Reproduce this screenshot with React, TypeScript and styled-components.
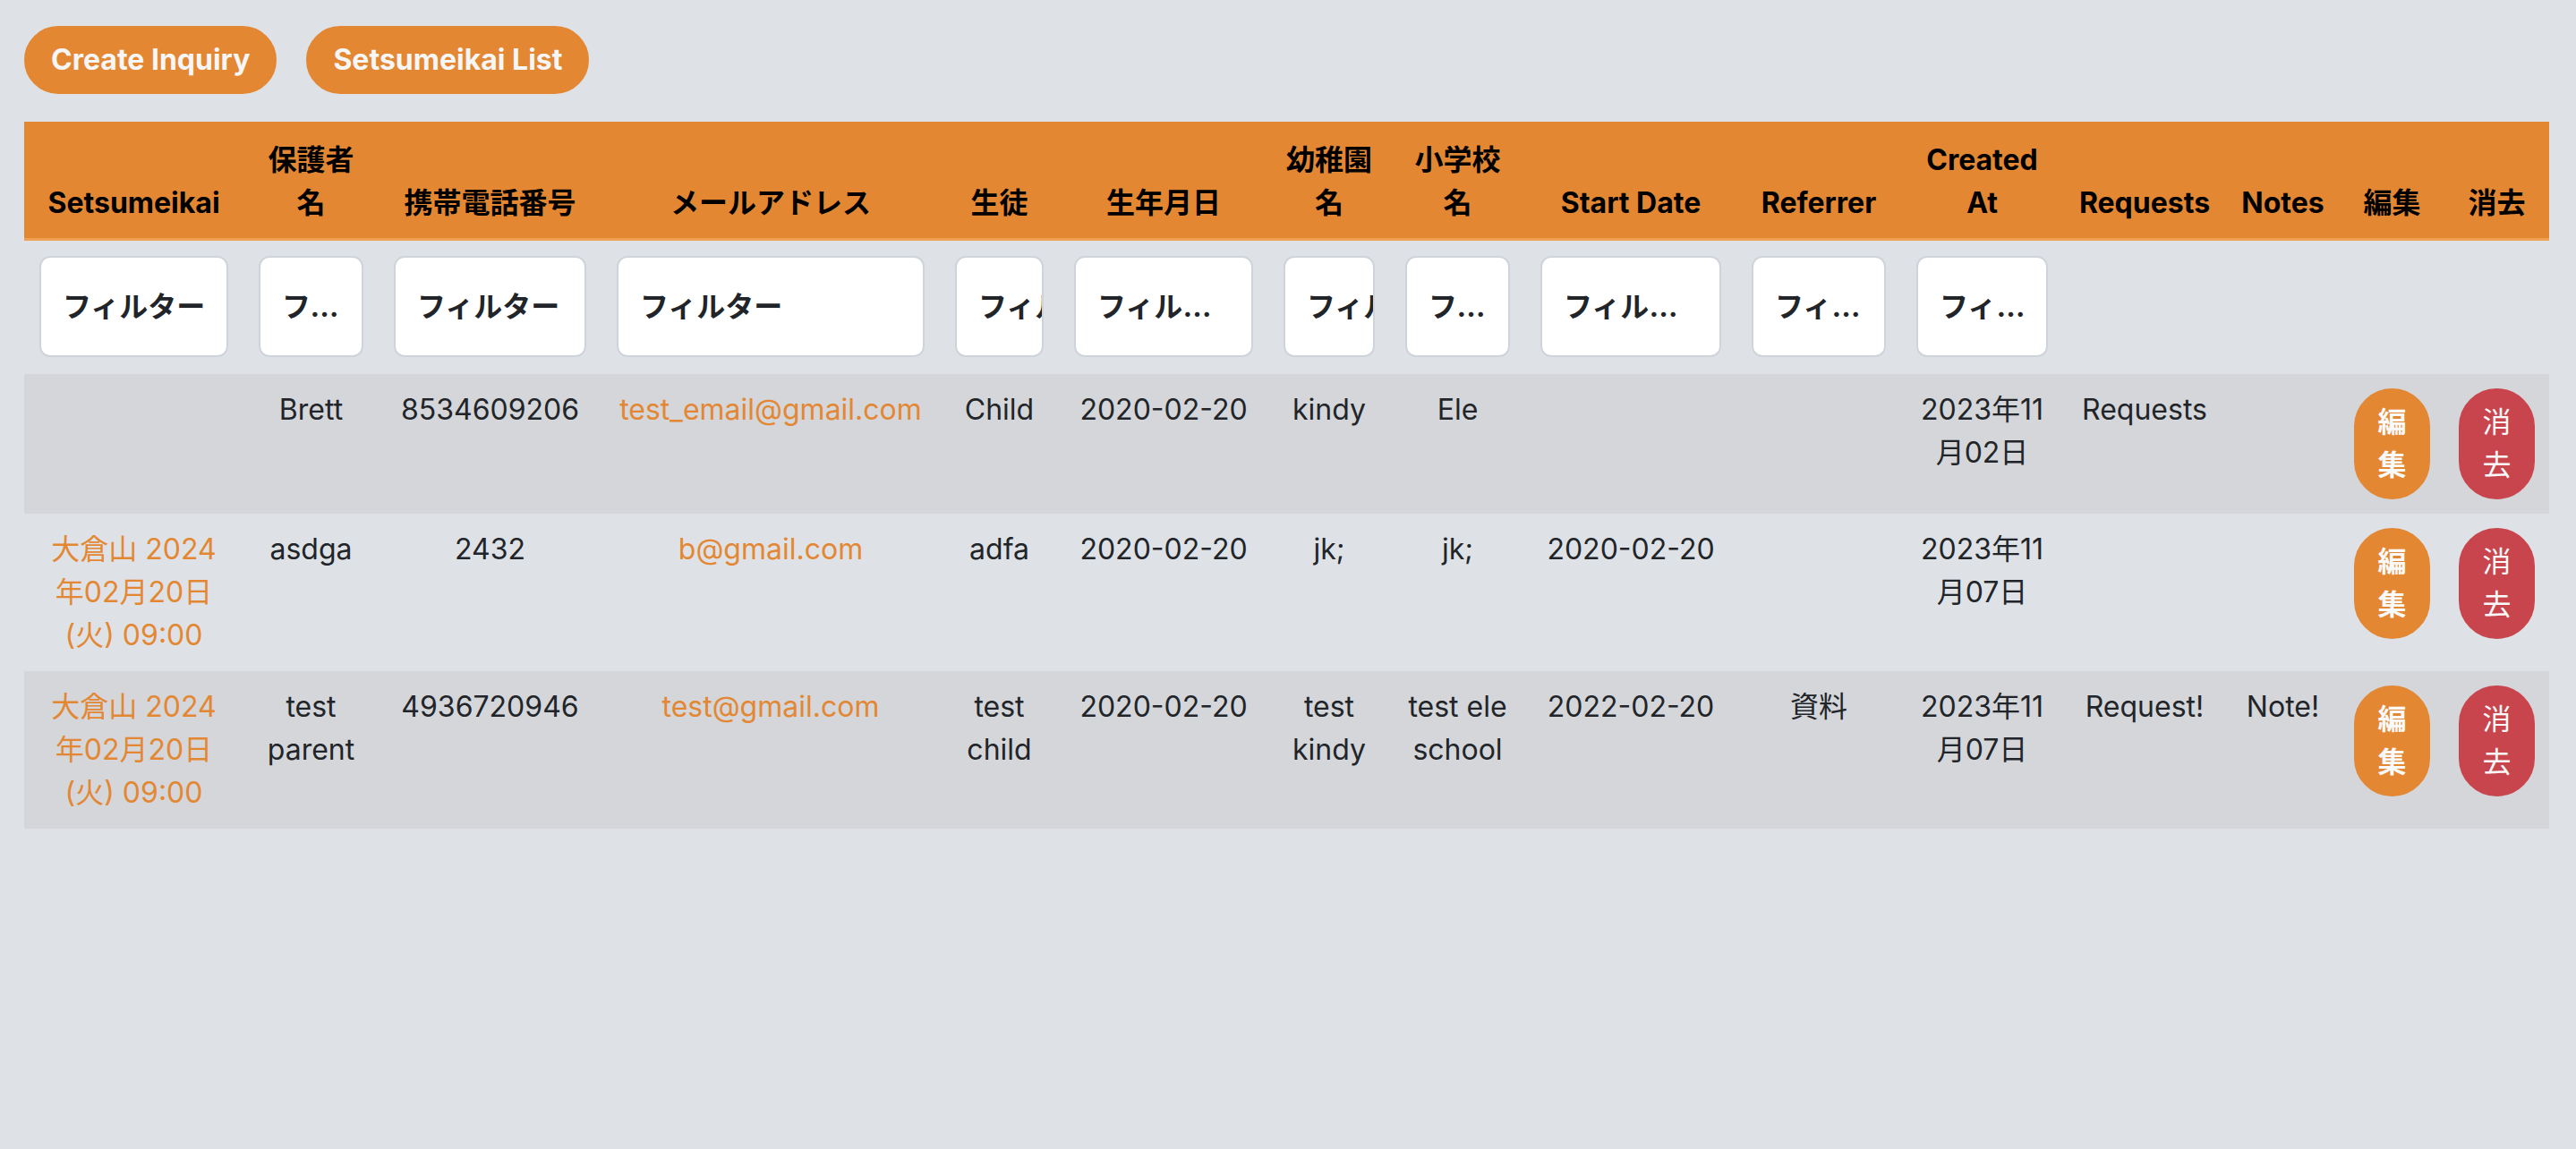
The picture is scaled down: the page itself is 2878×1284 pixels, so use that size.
import React from "react";
import styled, { createGlobalStyle } from "styled-components";

const GlobalStyle = createGlobalStyle`
  html, body {
    margin: 0;
    padding: 0;
    background: #dee2e6;
  }
  body {
    font-family: Inter, "Noto Sans CJK JP", sans-serif;
    color: #212529;
    font-size: 32px;
    line-height: 1.5;
  }
  #root {
    min-height: 100vh;
  }
`;

const Page = styled.div`
  padding: 29px 30px 40px 27px;
`;

const Toolbar = styled.div`
  display: flex;
  gap: 33px;
  margin-bottom: 31px;
`;

const PillButton = styled.button`
  font-family: Inter, "Noto Sans CJK JP", sans-serif;
  font-size: 32px;
  font-weight: 700;
  line-height: 48px;
  color: #f6f6f6;
  background: #e38733;
  border: 2px solid #e38733;
  border-radius: 999px;
  padding: 12px 28px;
  cursor: pointer;
`;

const Table = styled.table`
  width: 2821px;
  table-layout: fixed;
  border-collapse: collapse;
`;

const Col = styled.col<{ $w: number }>`
  width: ${(p) => p.$w}px;
`;

const HeadCell = styled.th`
  background: #e38733;
  color: #000;
  font-weight: 700;
  text-align: center;
  vertical-align: bottom;
  padding: 19px 17px 15px;
  border-bottom: 3px solid #f0a052;
`;

const FilterCell = styled.td`
  padding: 17px 17px 19px;
  vertical-align: top;
`;

const FilterInput = styled.input<{ $clip?: boolean }>`
  box-sizing: border-box;
  display: block;
  width: 100%;
  height: 113px;
  margin: 0;
  padding: 0 ${(p) => (p.$clip ? "0" : "20px")} 0 24px;
  border: 2px solid #ced4da;
  border-radius: 12px;
  background: #fff;
  font-family: Inter, "Noto Sans CJK JP", sans-serif;
  font-size: 32px;
  font-weight: 700;
  color: #212529;
  text-overflow: ${(p) => (p.$clip ? "clip" : "ellipsis")};
  &::placeholder {
    color: #212529;
    opacity: 1;
  }
`;

const Row = styled.tr<{ $striped: boolean }>`
  background: ${(p) => (p.$striped ? "#d4d6da" : "transparent")};
`;

const Cell = styled.td<{ $accent?: boolean }>`
  padding: 16px 17px;
  text-align: center;
  vertical-align: top;
  color: ${(p) => (p.$accent ? "#e38733" : "#212529")};
  white-space: nowrap;
`;

const ActionCell = styled.td`
  padding: 16px;
  text-align: center;
  vertical-align: top;
`;

const ActionButton = styled.button<{ $variant: "edit" | "delete" }>`
  box-sizing: border-box;
  display: block;
  width: 100%;
  padding: 12px 24px;
  border: 2px solid ${(p) => (p.$variant === "edit" ? "#e38733" : "#c9454d")};
  background: ${(p) => (p.$variant === "edit" ? "#e38733" : "#c9454d")};
  color: #fafafa;
  border-radius: 999px;
  font-family: Inter, "Noto Sans CJK JP", sans-serif;
  font-size: 32px;
  font-weight: ${(p) => (p.$variant === "edit" ? 700 : 400)};
  line-height: 48px;
  cursor: pointer;
`;

const widths = [245, 151, 249, 378, 133, 234, 136, 151, 236, 184, 181, 182, 127, 117, 117];

const headers = [
  "Setsumeikai",
  "保護者名",
  "携帯電話番号",
  "メールアドレス",
  "生徒",
  "生年月日",
  "幼稚園名",
  "小学校名",
  "Start Date",
  "Referrer",
  "Created At",
  "Requests",
  "Notes",
  "編集",
  "消去",
];

const clipped = new Set([4, 6]);

type Line = string[];
type Inquiry = {
  setsumeikai: Line;
  parent: Line;
  phone: string;
  email: string;
  student: Line;
  birth: string;
  kindy: Line;
  school: Line;
  start: string;
  referrer: string;
  created: Line;
  requests: string;
  notes: string;
};

const rows: Inquiry[] = [
  {
    setsumeikai: [],
    parent: ["Brett"],
    phone: "8534609206",
    email: "test_email@gmail.com",
    student: ["Child"],
    birth: "2020-02-20",
    kindy: ["kindy"],
    school: ["Ele"],
    start: "",
    referrer: "",
    created: ["2023年11", "月02日"],
    requests: "Requests",
    notes: "",
  },
  {
    setsumeikai: ["大倉山 2024", "年02月20日", "(火) 09:00"],
    parent: ["asdga"],
    phone: "2432",
    email: "b@gmail.com",
    student: ["adfa"],
    birth: "2020-02-20",
    kindy: ["jk;"],
    school: ["jk;"],
    start: "2020-02-20",
    referrer: "",
    created: ["2023年11", "月07日"],
    requests: "",
    notes: "",
  },
  {
    setsumeikai: ["大倉山 2024", "年02月20日", "(火) 09:00"],
    parent: ["test", "parent"],
    phone: "4936720946",
    email: "test@gmail.com",
    student: ["test", "child"],
    birth: "2020-02-20",
    kindy: ["test", "kindy"],
    school: ["test ele", "school"],
    start: "2022-02-20",
    referrer: "資料",
    created: ["2023年11", "月07日"],
    requests: "Request!",
    notes: "Note!",
  },
];

function Lines({ lines }: { lines: Line }) {
  return (
    <>
      {lines.map((l, i) => (
        <React.Fragment key={i}>
          {i > 0 && <br />}
          {l}
        </React.Fragment>
      ))}
    </>
  );
}

export default function App() {
  return (
    <>
      <GlobalStyle />
      <Page>
        <Toolbar>
          <PillButton>Create Inquiry</PillButton>
          <PillButton>Setsumeikai List</PillButton>
        </Toolbar>
        <Table>
          <colgroup>
            {widths.map((w, i) => (
              <Col key={i} $w={w} />
            ))}
          </colgroup>
          <thead>
            <tr>
              {headers.map((h) => (
                <HeadCell key={h}>{h}</HeadCell>
              ))}
            </tr>
            <tr>
              {headers.map((h, i) =>
                i < 11 ? (
                  <FilterCell key={h}>
                    <FilterInput placeholder="フィルター" $clip={clipped.has(i)} />
                  </FilterCell>
                ) : (
                  <FilterCell key={h} />
                )
              )}
            </tr>
          </thead>
          <tbody>
            {rows.map((r, idx) => (
              <Row key={idx} $striped={idx % 2 === 0}>
                <Cell $accent>
                  <Lines lines={r.setsumeikai} />
                </Cell>
                <Cell>
                  <Lines lines={r.parent} />
                </Cell>
                <Cell>{r.phone}</Cell>
                <Cell $accent>{r.email}</Cell>
                <Cell>
                  <Lines lines={r.student} />
                </Cell>
                <Cell>{r.birth}</Cell>
                <Cell>
                  <Lines lines={r.kindy} />
                </Cell>
                <Cell>
                  <Lines lines={r.school} />
                </Cell>
                <Cell>{r.start}</Cell>
                <Cell>{r.referrer}</Cell>
                <Cell>
                  <Lines lines={r.created} />
                </Cell>
                <Cell>{r.requests}</Cell>
                <Cell>{r.notes}</Cell>
                <ActionCell>
                  <ActionButton $variant="edit">編集</ActionButton>
                </ActionCell>
                <ActionCell>
                  <ActionButton $variant="delete">消去</ActionButton>
                </ActionCell>
              </Row>
            ))}
          </tbody>
        </Table>
      </Page>
    </>
  );
}
